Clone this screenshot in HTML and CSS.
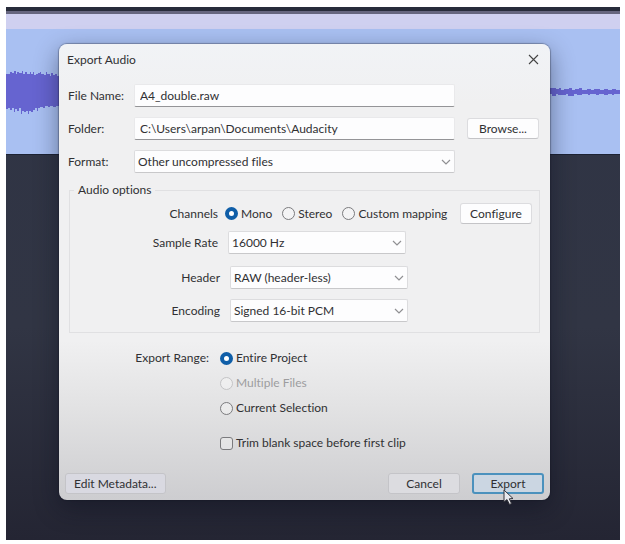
FILE: index.html
```
<!DOCTYPE html>
<html lang="en">
<head>
    <meta charset="UTF-8">
    <title>Export Audio</title>
    <link rel="stylesheet" href="styles.css">
</head>
<body>
    <main class="workspace">
        <div class="ruler"></div>
        <div class="clip-header"></div>
        <div class="clip">
            <svg class="wave wave-left" width="60" height="56" viewBox="0 0 60 56">
                <path fill="#6664d0" d="M0 10V45H2V44H4V46H6V44H8V48H9V45H11V47H13V44H15V50H16V47H18V48H20V47H22V50H23V47H25V48H27V46H29V44H31V47H32V44H34V43H37V44H39V42H42V43H44V42H47V43H50V42H60V11H54V12H51V10H49V11H47V9H45V12H44V10H41V8H40V11H38V10H35V8H34V9H32V10H30V11H28V8H27V10H25V8H24V10H21V8H19V10H17V7H16V9H13V8H11V10H10V7H8V9H6V8H4V10Z"/>
            </svg>
            <svg class="wave wave-right" width="76" height="20" viewBox="0 0 76 20">
                <path fill="#6664d0" d="M0 6V14H6V12H8V14H12V12H14V13H22V12H24V14H30V12H33V13H38V12H44V13H46V12H52V13H55V12H60V13H64V12H68V13H70V12H76V8H72V7H68V8H64V7H60V8H56V7H50V8H47V7H43V8H38V6H35V7H31V8H28V6H25V7H20V8H17V6H15V7H12V6Z"/>
            </svg>
        </div>

        <form class="dialog" role="dialog" aria-labelledby="dialog-title">
            <header class="title-bar">
                <h1 id="dialog-title">Export Audio</h1>
                <button class="close-btn" type="button" aria-label="Close">
                    <svg width="11" height="11" viewBox="0 0 11 11"><path d="M1 1L10 10M10 1L1 10" stroke="#444" stroke-width="1.1" fill="none"/></svg>
                </button>
            </header>

            <div class="file-fields">
                <label for="file-name">File Name:</label>
                <input class="text-box" id="file-name" type="text" value="A4_double.raw">

                <label for="folder">Folder:</label>
                <input class="text-box" id="folder" type="text" value="C:\Users\arpan\Documents\Audacity">
                <button class="btn" type="button">Browse...</button>

                <label for="format">Format:</label>
                <select class="drop-down" id="format">
                    <option>Other uncompressed files</option>
                </select>
            </div>

            <fieldset class="audio-options">
                <legend>Audio options</legend>
                <div class="option-row channels" role="radiogroup" aria-labelledby="channels-label">
                    <span class="option-label" id="channels-label">Channels</span>
                    <div class="channel-choices">
                        <label class="choice"><input type="radio" name="channels" checked>Mono</label>
                        <label class="choice"><input type="radio" name="channels">Stereo</label>
                        <label class="choice"><input type="radio" name="channels">Custom mapping</label>
                    </div>
                    <button class="btn" type="button">Configure</button>
                </div>
                <div class="option-row">
                    <label class="option-label" for="sample-rate">Sample Rate</label>
                    <select class="drop-down" id="sample-rate"><option>16000 Hz</option></select>
                </div>
                <div class="format-options">
                    <div class="option-row">
                        <label class="option-label" for="header">Header</label>
                        <select class="drop-down" id="header"><option>RAW (header-less)</option></select>
                    </div>
                    <div class="option-row">
                        <label class="option-label" for="encoding">Encoding</label>
                        <select class="drop-down" id="encoding"><option>Signed 16-bit PCM</option></select>
                    </div>
                </div>
            </fieldset>

            <div class="export-range" role="radiogroup" aria-labelledby="range-label">
                <span id="range-label">Export Range:</span>
                <div class="range-choices">
                    <label class="choice"><input type="radio" name="range" checked>Entire Project</label>
                    <label class="choice disabled"><input type="radio" name="range" disabled>Multiple Files</label>
                    <label class="choice"><input type="radio" name="range">Current Selection</label>
                    <label class="choice trim"><input type="checkbox">Trim blank space before first clip</label>
                </div>
            </div>

            <footer class="actions">
                <button class="btn metadata" type="button">Edit Metadata...</button>
                <button class="btn" type="button">Cancel</button>
                <button class="btn primary" type="button">Export
                    <svg class="cursor" width="12" height="17" viewBox="0 0 12 17"><path d="M1 1V13L4 10.5L6.5 15.5L8.5 14.5L6.3 9.8L10 9.5Z" fill="#e8e9ee" stroke="#34343c" stroke-width="1"/></svg>
                </button>
            </footer>
        </form>
    </main>
</body>
</html>
```
FILE: styles.css
```
* {
    box-sizing: border-box;
}
body {
    margin: 0;
    padding: 7px 5px 4px 6px;
    min-height: 100vh;
    display: flex;
    background: #fff;
    color: #303033;
    font-family: Lato, "Open Sans", sans-serif;
    font-size: 12px;
    line-height: 16px;
    font-variant-ligatures: none;
}
input, select, button {
    font: inherit;
    font-variant-ligatures: none;
    color: inherit;
    margin: 0;
}
.workspace {
    position: relative;
    flex: 1;
    overflow: hidden;
    background: linear-gradient(#2f3445 0%, #313544 60%, #242533 100%);
}
.ruler {
    height: 7px;
    background: #66667f;
    border-top: 4px solid #282c3b;
}
.clip-header {
    height: 15px;
    background: #cfd0f0;
}
.clip {
    display: flex;
    align-items: center;
    justify-content: space-between;
    height: 126px;
    background: #a9c0f2;
    border-bottom: 1px solid #1d2334;
}

/* dialog */
.dialog {
    position: absolute;
    top: 37px;
    left: 53px;
    right: 70px;
    display: flex;
    flex-direction: column;
    background: linear-gradient(#f1f3f6 0, #f0f0f1 60px, #f0f0f1 65%, #e2e2e3 80%, #cdcdd0 100%);
    border-radius: 8px;
    box-shadow: 0 0 1px 1px rgba(20,24,36,0.3), 0 8px 24px rgba(10,14,28,0.45);
}
.title-bar {
    display: flex;
    align-items: center;
    justify-content: space-between;
    height: 31px;
    padding: 0 7px 0 8px;
}
.title-bar h1 {
    margin: 0;
    font-size: 12px;
    font-weight: normal;
}
.close-btn {
    display: flex;
    padding: 4px;
    border: none;
    background: none;
}
.file-fields {
    display: grid;
    grid-template-columns: 66px 1fr 72px;
    row-gap: 10px;
    align-items: center;
    padding: 9px 11px 0 9px;
}
.file-fields label {
    grid-column: 1;
}
.text-box, .drop-down {
    grid-column: 2;
    width: 100%;
    height: 23px;
    padding: 0 5px;
    border: 1px solid #e9e9eb;
    border-radius: 2px;
    background-color: #fdfdfe;
    outline: none;
}
.text-box {
    border-bottom-color: #949497;
}
.drop-down {
    appearance: none;
    padding: 0 3px;
    border-color: #dcdcde;
    border-bottom-color: #c8c8ca;
    background-image: url("data:image/svg+xml,%3Csvg xmlns='http://www.w3.org/2000/svg' width='10' height='6' viewBox='0 0 10 6'%3E%3Cpath d='M1 1L5 5L9 1' fill='none' stroke='%23909093' stroke-width='1.2'/%3E%3C/svg%3E");
    background-repeat: no-repeat;
    background-position: right 3px center;
}
.file-fields .text-box, .file-fields .drop-down {
    width: calc(100% - 12px);
}
.btn {
    min-width: 72px;
    height: 21px;
    padding: 0 8px;
    border: 1px solid #dcdcdf;
    border-bottom-color: #c4c4c7;
    border-radius: 3px;
    background: #fdfdfe;
    line-height: 18px;
    white-space: nowrap;
}

/* audio options group */
.audio-options {
    min-width: 0;
    margin: 9px 10px 0 10px;
    padding: 5px 7px 10px 0;
    border: 1px solid #e0e0e2;
}
.audio-options legend {
    margin-left: 4px;
    padding: 0 4px;
}
.option-row {
    display: grid;
    grid-template-columns: 148px 178px 1fr;
    column-gap: 10px;
    align-items: center;
}
.option-label {
    text-align: right;
}
.channels {
    grid-template-columns: 148px 1fr 72px;
    column-gap: 7px;
    margin-bottom: 7px;
}
.format-options {
    display: grid;
    row-gap: 10px;
    margin-top: 12px;
    padding-left: 2px;
}
.channel-choices {
    display: flex;
    gap: 10px;
}
.choice {
    display: flex;
    align-items: center;
    gap: 3px;
    white-space: nowrap;
}
.choice input {
    appearance: none;
    width: 13px;
    height: 13px;
    border: 1px solid #7b7b7e;
    border-radius: 50%;
    background: rgba(255,255,255,0.3);
}
.choice input[type="radio"]:checked {
    border: 4px solid #0f5ea8;
    background: #fff;
}
.choice input[type="checkbox"] {
    border-radius: 3px;
}
.choice.disabled {
    color: #9d9d9f;
}
.disabled input {
    border-color: #c4c4c6;
}

/* export range */
.export-range {
    display: grid;
    grid-template-columns: 150px 1fr;
    column-gap: 11px;
    padding-top: 17px;
}
.export-range > span {
    text-align: right;
}
.range-choices {
    display: grid;
    row-gap: 9px;
}
.trim {
    margin-top: 10px;
}
.actions {
    display: flex;
    gap: 12px;
    padding: 22px 6px 6px;
}
.actions .btn {
    border-color: #c4c4c8;
    background: #dcdce0;
}
.actions .metadata {
    margin-right: auto;
    background: #d9d9e1;
}
.actions .primary {
    position: relative;
    border: 2px solid #4b91bd;
    background: #cbd6e2;
    line-height: 16px;
}
.cursor {
    position: absolute;
    left: 29px;
    top: 14px;
}
```
